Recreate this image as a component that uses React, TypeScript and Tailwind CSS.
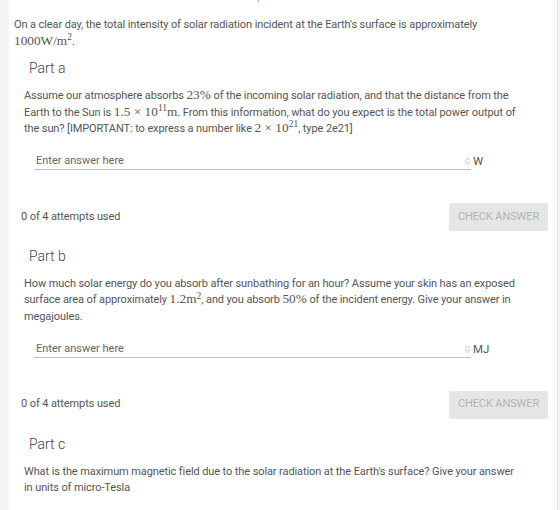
const serif = "font-['Liberation_Serif',serif] text-[13.3px] leading-[14px] tracking-normal";

function M({ children }: { children: React.ReactNode }) {
  return <span className={serif}>{children}</span>;
}

function Sup({ children }: { children: React.ReactNode }) {
  return <sup className="text-[9.5px]">{children}</sup>;
}

function AnswerRow({ unit }: { unit: string }) {
  return (
    <div className="mt-[15px] flex items-end pl-[25px] text-[11px] leading-[16px]">
      <div className="relative h-[17px] w-[437px] border-b border-[#bdbdbd]">
        <div className="pl-[2px] text-[#666]">Enter answer here</div>
        <svg width="5" height="8" viewBox="0 0 5 8" className="absolute right-[1px] top-[4px]">
          <rect x="0.5" y="0.5" width="4" height="7" rx="2" fill="none" stroke="#ddd" />
          <path d="M1.5 3 L2.5 2 L3.5 3 M1.5 5 L2.5 6 L3.5 5" stroke="#999" strokeWidth="0.6" fill="none" />
        </svg>
      </div>
      <span className="pb-[1px] pl-[2px] text-[11.5px] text-[#555]">{unit}</span>
    </div>
  );
}

function Attempts() {
  return (
    <div className="mt-[33px] flex items-center justify-between pl-[12px] pr-[9px]">
      <span className="text-[11px] tracking-[-0.1px] text-[#555]">0 of 4 attempts used</span>
      <button className="h-[28px] w-[99px] rounded-[2px] bg-[#e6e6e6] text-[11px] tracking-[-0.1px] text-[#b3b3b3]">
        CHECK ANSWER
      </button>
    </div>
  );
}

function Heading({ children }: { children: React.ReactNode }) {
  return <h2 className="mt-[15px] pl-[20px] text-[14px] font-light leading-[20px] text-[#444]">{children}</h2>;
}

function Para({ children }: { children: React.ReactNode }) {
  return (
    <p className="mt-[10px] pl-[15px] pr-[39px] text-[11px] leading-[16.6px] tracking-[-0.1px] text-[#555]">
      {children}
    </p>
  );
}

export default function App() {
  return (
    <div className="h-[510px] w-[560px] overflow-hidden bg-[#f5f5f5] pl-[9px] font-['Roboto',sans-serif]">
      <div className="relative h-full w-[549px] border-r border-[#e2e2e2] bg-white">
        <div className="absolute left-[248px] top-[-11px] text-[11px] text-[#7c9cf5]">part</div>
        <p className="pl-[5px] pr-[39px] pt-[16px] text-[11px] leading-[17px] tracking-[-0.1px] text-[#555]">
          On a clear day, the total intensity of solar radiation incident at the Earth's surface is approximately{' '}
          <M>
            1000W/m<Sup>2</Sup>
          </M>
          .
        </p>

        <h2 className="mt-[8px] pl-[20px] text-[14px] font-light leading-[20px] text-[#444]">Part a</h2>
        <Para>
          Assume our atmosphere absorbs <M>23%</M> of the incoming solar radiation, and that the distance from the
          Earth to the Sun is{' '}
          <M>
            1.5 × 10<Sup>11</Sup>m
          </M>
          . From this information, what do you expect is the total power output of the sun? [IMPORTANT: to express a
          number like{' '}
          <M>
            2 × 10<Sup>21</Sup>
          </M>
          , type 2e21]
        </Para>
        <AnswerRow unit="W" />
        <Attempts />

        <Heading>Part b</Heading>
        <Para>
          How much solar energy do you absorb after sunbathing for an hour? Assume your skin has an exposed surface
          area of approximately{' '}
          <M>
            1.2m<Sup>2</Sup>
          </M>
          , and you absorb <M>50%</M> of the incident energy. Give your answer in megajoules.
        </Para>
        <AnswerRow unit="MJ" />
        <Attempts />

        <Heading>Part c</Heading>
        <Para>
          What is the maximum magnetic field due to the solar radiation at the Earth's surface? Give your answer in
          units of micro-Tesla
        </Para>
      </div>
    </div>
  );
}
